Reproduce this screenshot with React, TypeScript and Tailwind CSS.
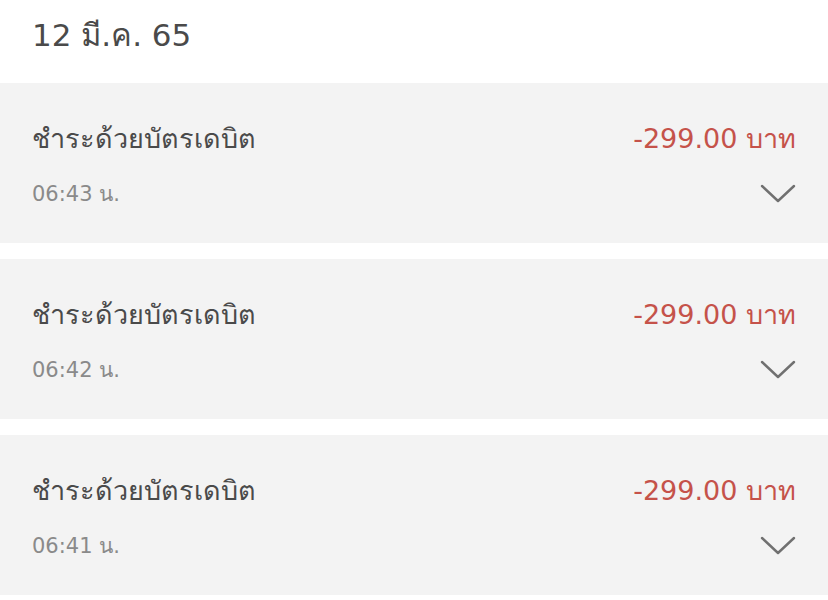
import React from "react";

const items = [
  { time: "06:43 น." },
  { time: "06:42 น." },
  { time: "06:41 น." },
];

function Chevron() {
  return (
    <svg width="36" height="20" viewBox="0 0 36 20" fill="none">
      <path d="M2 2 L18 17 L34 2" stroke="#707070" strokeWidth="2.4" strokeLinecap="round" strokeLinejoin="round" />
    </svg>
  );
}

export default function App() {
  return (
    <div className="w-[828px] h-[600px] bg-white overflow-hidden" style={{ fontFamily: '"DejaVu Sans", "Noto Sans", sans-serif' }}>
      <div className="h-[83px] flex items-center px-[32px]">
        <span className="text-[31px] text-[#4a4a4a] leading-none mt-[-12px]">12 มี.ค. 65</span>
      </div>
      <div className="flex flex-col gap-[16px]">
        {items.map((it, i) => (
          <div key={i} className="h-[160px] bg-[#f3f3f3] px-[32px] flex flex-col">
            <div className="flex justify-between items-center mt-[39px] h-[32px]">
              <span className="text-[27px] text-[#4a4a4a] leading-none">ชำระด้วยบัตรเดบิต</span>
              <span className="text-[27px] text-[#c5524a] leading-none">-299.00 บาท</span>
            </div>
            <div className="flex justify-between items-center mt-[28px] h-[24px]">
              <span className="text-[21px] text-[#8a8a8a] leading-none">{it.time}</span>
              <Chevron />
            </div>
          </div>
        ))}
      </div>
    </div>
  );
}
